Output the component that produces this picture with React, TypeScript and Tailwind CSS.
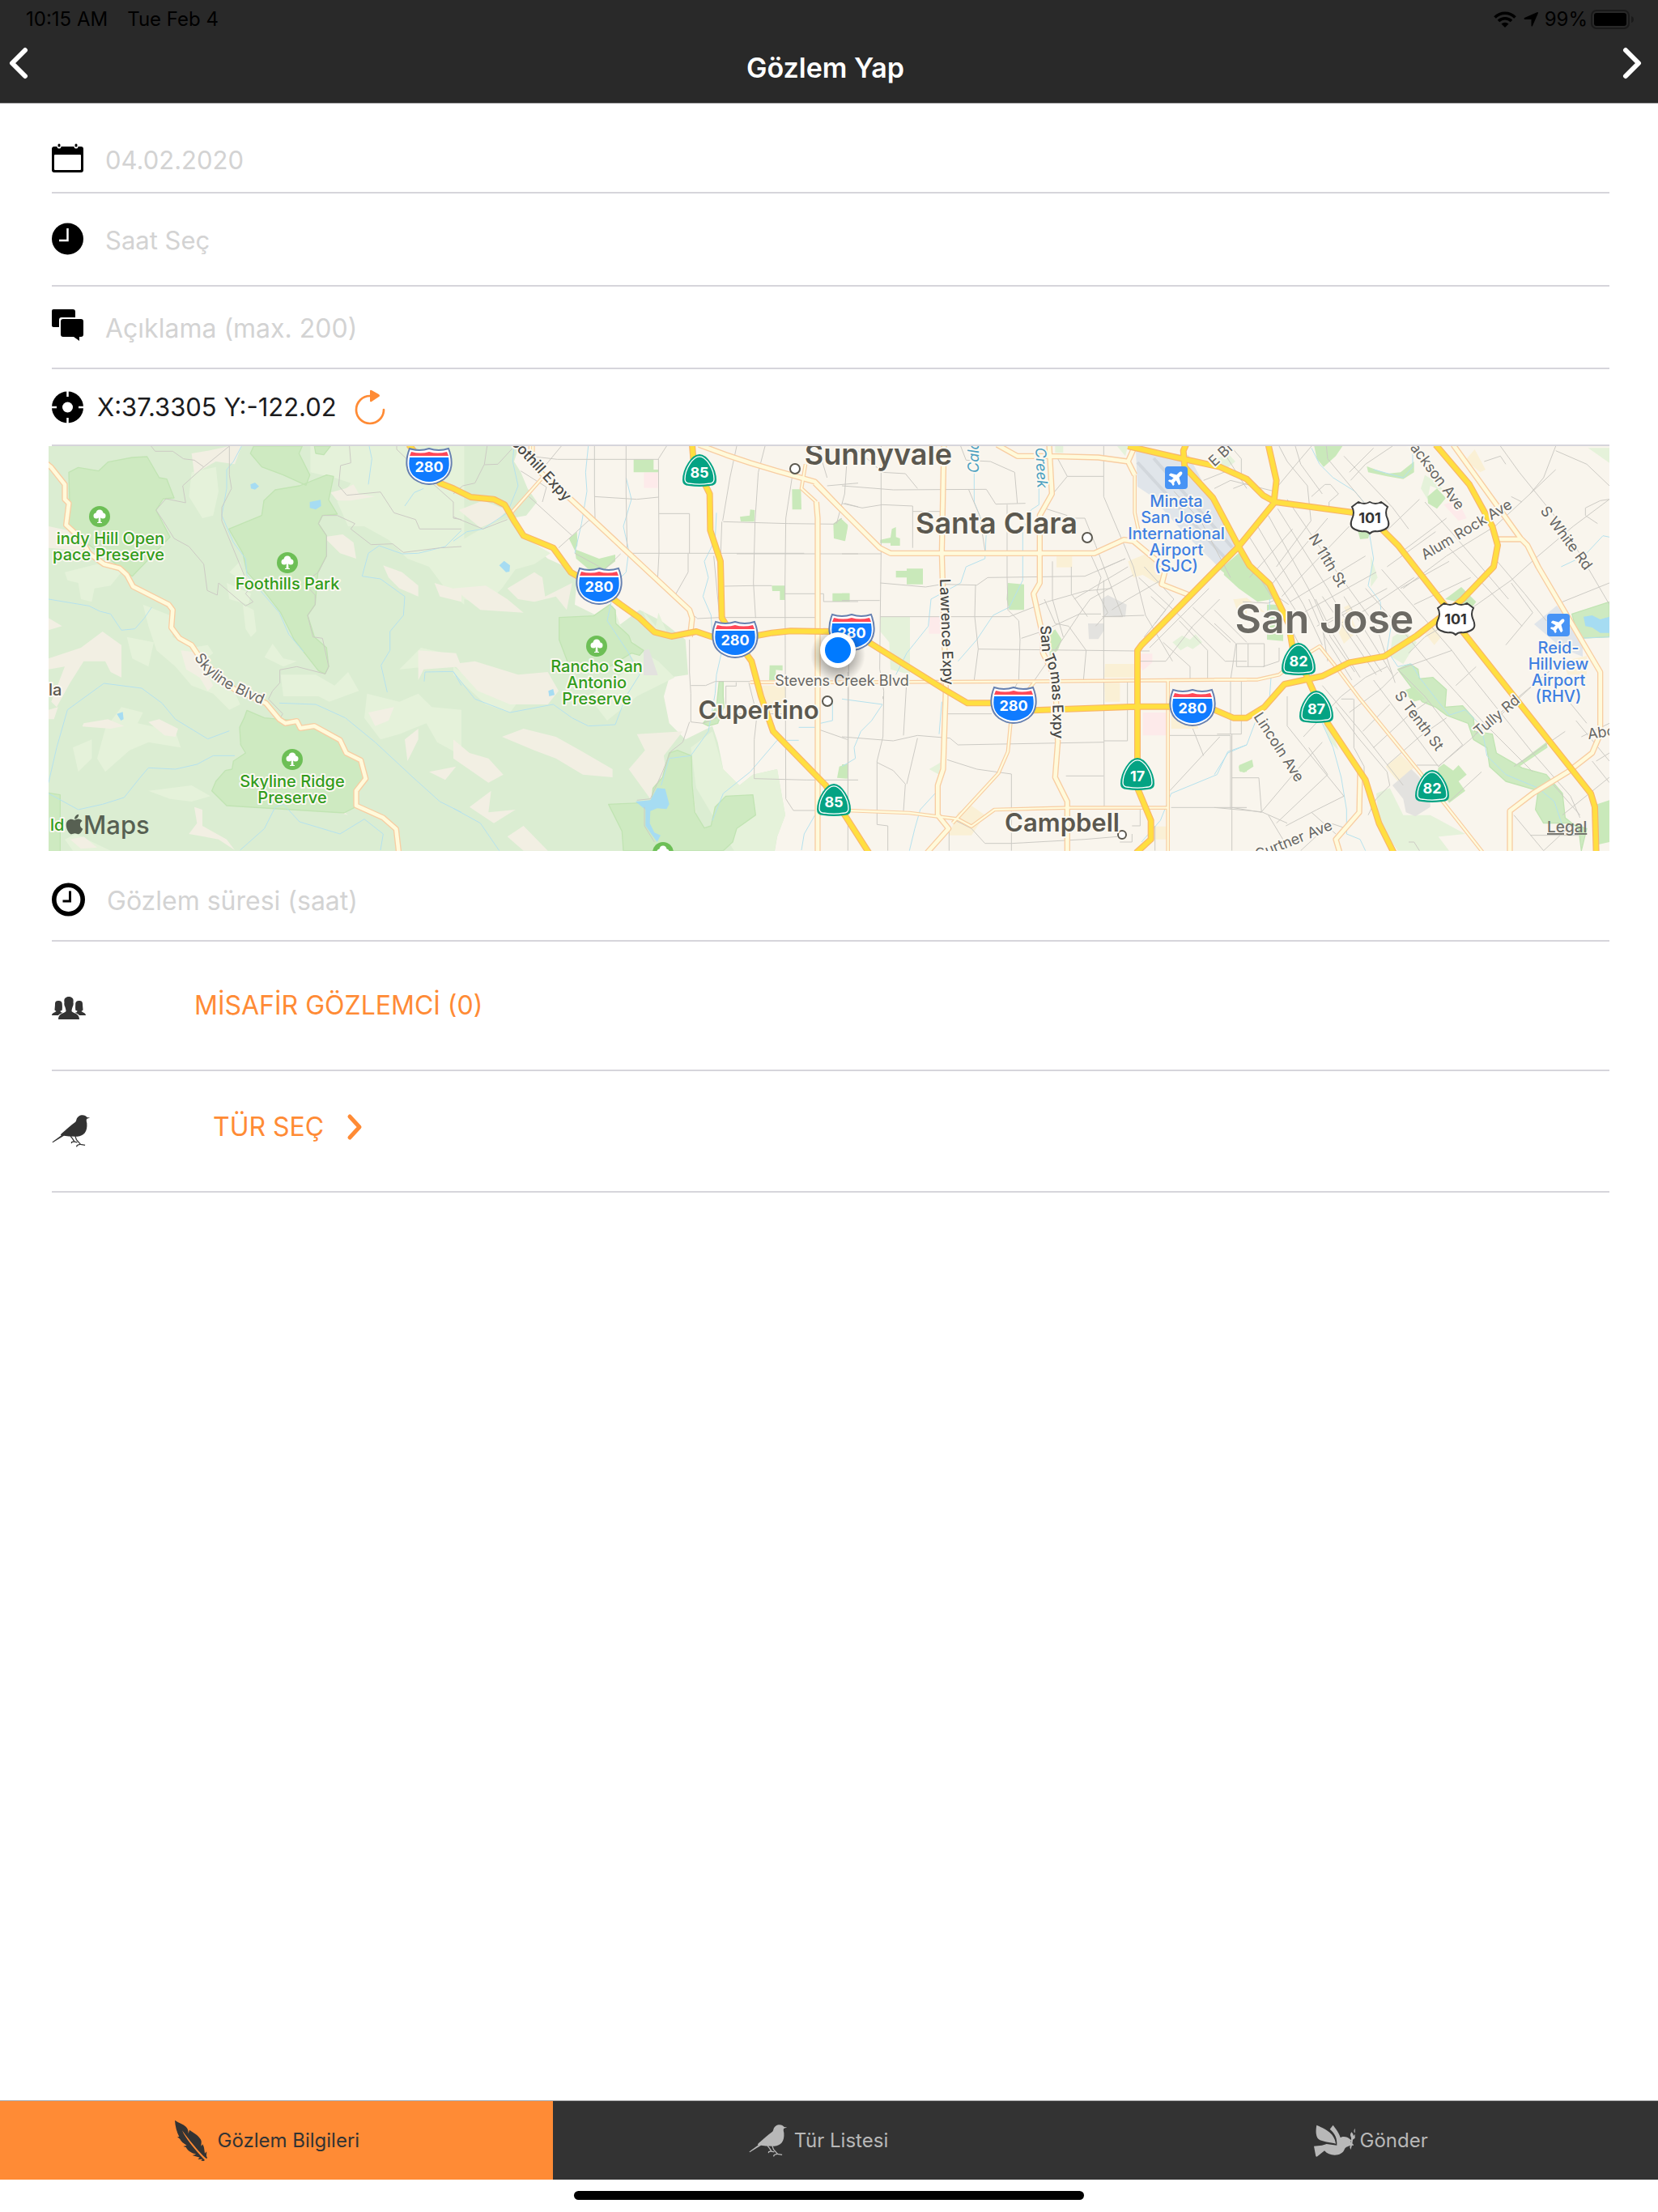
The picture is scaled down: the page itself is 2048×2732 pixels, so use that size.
import React from "react";
import { FaApple, FaPlane } from "react-icons/fa";

/* ---------- icons ---------- */

function BirdIcon({ className }: { className?: string }) {
  return (
    <svg viewBox="136 131 146 124" className={className} aria-hidden="true">
      <path
        fill="currentColor"
        d="M281 142 L269 146 C266 150 267 156 269 163 C270 180 268 190 261 200 C254 208 245 213 232 214 L200 213 L181 211 L138 237 L136 235 L171 209 L168 207 L172 202 C190 188 208 170 224 159 C228 156 228 152 229 149 C232 138 242 132 252 132 C260 132 266 136 270 140 Z"
      />
      <path
        fill="none"
        stroke="currentColor"
        strokeWidth="4"
        d="M206 212 L214 222 L221 233 L211 235 L210 240 M221 234 L232 236 M224 212 L229 226 L244 243 L232 247 L229 253 M244 244 L262 247"
      />
    </svg>
  );
}

function FeatherIcon() {
  return (
    <svg viewBox="99 106 168 168" className="size-14" aria-hidden="true">
      <path
        fill="currentColor"
        d="M111 114 C125 124 142 128 152 138 C160 146 161 154 161 164 L165 150 C180 160 196 168 206 184 C212 194 208 200 209 210 L214 203 C218 210 219 216 220 222 C221 230 222 233 222 237 L228 230 C230 240 225 246 231 252 L229 257 C222 252 210 240 200 229 C180 206 155 176 138 152 C150 180 180 218 222 262 L218 265 L208 264 L213 258 L196 259 L203 252 L176 244 L190 240 C172 236 160 228 152 214 L142 211 L155 207 C142 200 134 192 130 184 L120 175 L127 175 C118 158 112 135 111 114 Z"
      />
    </svg>
  );
}

function DoveIcon() {
  return (
    <svg viewBox="132 106 168 168" className="size-14 overflow-visible" aria-hidden="true">
      <g fill="currentColor">
        <path d="M139 132 C165 144 205 158 210 201 C190 196 160 194 146 184 C134 172 136 148 139 132 Z" />
        <path d="M188 147 L200 132 C206 142 220 155 227 178 C236 172 254 174 262 184 L272 190 L264 192 C268 198 278 204 276 207 L262 208 C252 212 246 215 243 220 C238 236 222 243 206 243 C190 243 178 238 168 227 L140 249 L136 248 L129 210 L159 207 L176 202 L214 207 C216 180 206 162 188 147 Z" />
        <path d="M268 158 C275 164 276 170 275 173 L281 166 V180 L273 186 C272 196 270 210 265 223 L262 214 C266 200 268 188 267 178 C262 170 264 164 268 158 Z" />
        <path d="M281 144 V161 C276 158 276 151 281 144 Z" />
      </g>
    </svg>
  );
}

function CalendarIcon() {
  return (
    <svg viewBox="0 0 40 40" className="size-10" aria-hidden="true">
      <rect x="0" y="5" width="39" height="32" rx="3" />
      <rect x="3" y="15" width="33" height="19" rx="1" fill="#fff" />
      <g stroke="#fff" strokeWidth="5" strokeLinecap="round">
        <path d="M9 4 V5 M30 4 V5" />
      </g>
      <g stroke="#000" strokeWidth="3" strokeLinecap="round">
        <path d="M9 3 V4 M30 3 V4" />
      </g>
    </svg>
  );
}

function SolidClockIcon() {
  return (
    <svg viewBox="0 0 40 40" className="size-10" aria-hidden="true">
      <circle cx="19.5" cy="20" r="19.5" />
      <path d="M19.500 7 V22 H9" fill="none" stroke="#fff" strokeWidth="2.500" />
    </svg>
  );
}

function CommentsIcon() {
  return (
    <svg viewBox="0 0 40 40" className="size-10" aria-hidden="true">
      <path d="M2 0 H26 Q29 0 29 3 V10 H12 Q9 10 9 13 V22 H2 Q0 22 0 20 V2 Q0 0 2 0 Z" />
      <path d="M14 12 H36 Q39 12 39 15 V31 Q39 34 36 34 H34 V39 L27 34 H14 Q11 34 11 31 V15 Q11 12 14 12 Z" />
    </svg>
  );
}

function TargetIcon() {
  return (
    <svg viewBox="0 0 40 40" className="size-10" aria-hidden="true">
      <circle cx="19.5" cy="20" r="19.5" />
      <circle cx="19.5" cy="20" r="6.5" fill="#fff" />
      <path d="M19.500 0 V7 M19.500 33 V40 M0 20 H6 M33 20 H40" stroke="#fff" strokeWidth="2.500" />
    </svg>
  );
}

function RefreshIcon() {
  return (
    <svg viewBox="0 0 40 44" className="h-11 w-10" aria-hidden="true">
      <path d="M36 25 A17 17 0 1 1 19 8 H22" fill="none" stroke="#ff8b35" strokeWidth="2.700" strokeLinecap="round" />
      <path d="M19 2 Q19 0 21 1 L30 6 Q32 8 30 9 L21 15 Q19 16 19 14 Z" fill="#ff8b35" />
    </svg>
  );
}

function RingClockIcon() {
  return (
    <svg viewBox="0 0 42 42" className="size-[42px]" aria-hidden="true">
      <circle cx="20.5" cy="21" r="17.7" fill="none" stroke="#000" strokeWidth="5.600" />
      <path d="M22.500 10.500 V23 H13.500" fill="none" stroke="#000" strokeWidth="3" />
    </svg>
  );
}

function PeopleIcon() {
  const side =
    "M4 9 C4 5.500 6 5 8 5 C11 5 13 6 12.800 10 C13 13 13 15 12.500 17 L10.500 17.500 C10.500 19 12 19.500 13.500 20 C11 20.500 9 21.500 8 23 H0 C0 20 4 19.500 5.500 18 L3.500 16.500 C3.500 14 4 12 4 9 Z";
  return (
    <svg viewBox="0 0 42 28" className="mt-1.5 h-7 w-[42px]" fill="#333" aria-hidden="true">
      <path d={side} />
      <path d={side} transform="translate(42 0) scale(-1 1)" />
      <path d="M15.500 7 C14.500 2 17.500 0 21 0 C24.500 0 27.500 2 26.500 7 C27 9 26.500 11 25.500 13 C25 15 24.500 16 24.500 18 C27 21 34 20.500 34 28 H8 C8 20.500 15 21 17.500 18 C17.500 16 17 15 16.500 13 C15.500 11 15 9 15.500 7 Z" />
    </svg>
  );
}

function Chevron({ direction }: { direction: "left" | "right" }) {
  return (
    <svg viewBox="0 0 24 40" className="h-10 w-6" aria-hidden="true">
      <path
        d={direction === "left" ? "M20 4 L4 20 L20 36" : "M4 4 L20 20 L4 36"}
        fill="none"
        stroke="currentColor"
        strokeWidth="6"
        strokeLinecap="round"
        strokeLinejoin="round"
      />
    </svg>
  );
}

/* ---------- map geometry (three units per pixel, four tiles) ---------- */

type Tile = {
  x: number;
  city?: string[];
  light?: string[];
  beige?: string[];
  park?: string[];
  lawn?: string[];
  sand?: string[];
  pink?: string[];
  grey?: string[];
  water?: string[];
  creek?: string[];
  street?: string[];
  thin?: string[];
  wide?: string[];
  highway?: string[];
};

const tiles: Tile[] = [
  {
    x: -10,
    light: [
      "M1000 33 H1570 V620 L1500 560 L1440 480 L1360 450 L1290 380 L1200 330 L1140 330 L1100 240 L1150 170 L1090 150 L1000 130 Z",
      "M560 130 L650 110 L660 200 L640 290 L600 300 L550 220 Z",
      "M90 500 L210 470 L300 500 L260 550 L200 560 L190 610 L150 600 L140 540 L100 530 Z",
      "M740 460 L760 540 L700 500 Z M690 540 L780 580 L770 620 L700 600 Z",
      "M750 620 L790 640 L800 720 L780 740 L760 710 Z M860 765 L900 820 L950 830 L900 850 L830 815 Z",
      "M380 620 L480 660 L490 740 L560 780 L620 770 L640 800 L600 830 L700 900 L740 990 L700 1010 L640 950 L560 920 L500 850 L430 790 L400 700 Z",
      "M320 740 L420 760 L400 850 L340 820 Z M890 880 L1020 880 L1090 920 L1140 870 L1180 940 L1070 980 L1030 960 L900 960 Z",
      "M240 1080 L300 1000 L380 1020 L360 1060 L500 1090 L520 1150 L400 1130 L330 1160 L240 1240 L210 1190 Z",
      "M120 1150 L190 1120 L190 1190 L140 1240 Z M400 1310 L560 1290 L630 1330 L560 1350 L480 1340 Z",
      "M1210 950 L1330 980 L1400 950 L1450 1000 L1560 1010 V1180 L1470 1130 L1430 1060 L1330 1100 L1260 1120 L1200 1040 Z",
      "M1330 860 L1380 810 L1410 780 L1500 800 L1440 850 Z",
      "M90 1490 L130 1470 L260 1532 H120 Z",
    ],
    beige: [
      "M560 60 L620 50 L700 33 L745 33 L720 100 L650 90 L570 135 Z",
      "M30 330 L100 345 L160 420 L30 410 Z",
      "M120 160 L230 140 L300 150 L300 180 L200 200 L160 230 L120 210 Z",
      "M30 820 L150 780 L230 720 L300 770 L300 890 L260 870 L240 830 L160 830 L110 910 L60 1000 L40 980 L90 850 L30 860 Z",
      "M30 670 L80 700 L30 715 Z M30 1010 L65 1000 L50 1045 L30 1045 Z",
      "M160 1060 L250 1045 L310 1070 L260 1080 L155 1072 Z M400 1055 L440 1045 L510 1080 L500 1110 L460 1105 Z",
      "M520 790 L600 800 L610 860 L640 920 L620 940 L590 890 L540 860 Z",
      "M1075 205 L1130 190 L1160 175 L1180 210 L1240 220 L1150 235 L1100 235 Z",
      "M1050 370 L1120 360 L1160 390 L1170 450 L1110 430 Z M1270 475 L1340 500 L1400 550 L1400 590 L1330 560 L1290 520 Z",
      "M1460 540 L1560 570 V610 L1480 590 Z M1400 790 L1540 800 L1560 850 L1420 860 L1400 900 Z",
      "M1215 1020 L1310 1000 L1290 1050 L1240 1070 Z M1350 1120 L1400 1080 L1400 1120 L1360 1200 Z M1440 1240 L1540 1220 L1500 1270 Z",
      "M570 1370 L600 1380 L600 1440 L690 1490 L720 1530 L660 1490 L550 1470 L580 1430 Z",
      "M110 1490 L160 1480 L210 1520 L150 1525 Z M940 300 L1010 290 L1010 340 L960 350 Z",
      "M980 1300 L1080 1350 L1140 1400 L1060 1380 Z",
    ],
    park: [
      "M105 130 L140 112 L215 125 L250 92 L340 75 L395 72 L440 150 L468 155 L495 225 L455 228 L428 270 L480 370 L340 515 L260 455 L160 385 L95 325 L108 245 Z",
      "M698 340 L820 290 L828 235 L870 195 L960 180 L1060 140 L1086 145 L1068 232 L1100 285 L1045 290 L1030 320 L1060 365 L1060 440 L1028 500 L1018 620 L990 660 L1015 740 L1060 780 L1068 850 L1055 877 L1030 865 L940 750 L890 650 L820 560 L765 500 L750 430 Z",
      "M778 60 L790 33 H970 L958 60 L998 140 L984 178 L900 140 L820 110 Z M1015 33 H1075 L1050 65 L1020 60 Z",
      "M765 1012 L830 1040 L885 1045 L950 1050 L965 1080 L1015 1070 L1110 1125 L1130 1170 L1185 1195 L1205 1265 L1168 1310 V1370 L1125 1392 L690 1365 L635 1310 L650 1275 L685 1235 L710 1230 L715 1200 L760 1170 L742 1140 L738 1075 L755 1040 Z",
      "M28 1318 L73 1325 V1534 H28 Z",
    ],
    water: [
      "M778 175 L795 168 L810 182 L795 194 L780 190 Z",
      "M998 240 L1038 232 L1040 255 L1020 268 L998 262 Z",
      "M283 1025 L305 1018 L308 1045 L298 1050 Z",
    ],
    creek: [
      "M745 33 L715 90 L690 120 L690 190 L672 290 L715 390 L760 450 L765 510 L885 650 L920 730 L975 795",
      "M1218 33 L1228 80 L1215 175 M1420 190 L1385 205 L1350 255 M1560 345 L1500 405 L1400 430 L1340 432 L1255 402 L1215 430 L1192 515 L1260 525 L1350 590 L1345 660 L1295 720 L1295 790 L1262 845 L1285 945",
      "M30 600 L180 625 L220 645 L260 655 L300 715 L350 710 L385 670 L412 630",
      "M30 1280 L60 1150 L100 1010 L235 912 L375 930 L450 985 L500 1045 L620 1118 L700 1088",
      "M30 1320 L140 1380 L230 1360 L310 1335 L370 1260 L400 1225 L500 1230 L580 1212 L640 1180 L720 1180",
      "M885 985 L1020 990 L1130 1040 L1240 1130 L1380 1260 L1480 1350 L1560 1390",
      "M740 1530 L830 1450 L870 1370 L900 1360 L960 1425 L1110 1470 L1200 1415 L1270 1470 L1260 1530",
      "M1422 905 L1425 870 L1530 868 L1560 920",
    ],
    street: [
      "M410 33 L425 52 L490 52 L530 80 L570 85 L605 110 L700 33 M700 33 L700 140 L708 190 L672 260 V310 L775 560 L760 580 L788 610 L760 625 L660 540 L655 585 L618 568 L605 470 L550 405 L495 375 L455 310 L428 270 L465 228 L538 243 L527 180 L605 110",
      "M1215 33 M1145 33 L1150 95 L1112 105 L1105 180 L1135 215 L1260 203 L1310 280 L1390 305 L1405 340 H1560 M1320 33 V45 L1440 160 L1530 240 L1530 300 L1560 305",
      "M1560 405 L1480 410 L1345 427 L1305 395 L1225 398 L1150 340 L1165 320 L1100 290 L1045 290 L1030 320 L1060 365 L1060 440 L1030 500 L975 540 L1018 585 V620 L990 660 L1010 740 L1045 745 L1068 850 L1055 877 L950 850 L887 862 V910 L860 940 L845 970 L898 1025 L885 1045",
    ],
    thin: [],
    wide: [
      "M20 95 L40 112 L90 175 V230 L105 245 L95 325 L150 375 L180 430 L235 470 L293 485 L320 510 L343 553 L475 620 L490 640 L485 705 L515 745 L560 770 L600 830 L720 935 L835 985 L885 1045 L908 1060 L950 1052 L963 1078 L1015 1070 L1110 1122 L1133 1170 L1187 1197 L1205 1265 L1170 1310 V1365 L1270 1410 L1318 1452 L1328 1540",
    ],
  },
  {
    x: 500,
    city: [
      "M245 30 L225 90 L250 130 L275 190 L310 240 L270 290 L215 300 L240 350 L350 450 L460 500 L450 620 L610 700 L690 640 L770 680 L860 750 L870 880 L800 890 L780 960 L800 1060 L860 1120 L960 1070 L980 1130 L1000 1230 L1060 1290 L1110 1250 L1200 1230 L1230 1400 L1200 1480 L1190 1540 H4310 V30 Z",
    ],
    light: [
      "M0 400 L120 330 L200 300 L260 370 L360 430 L300 470 L230 490 L180 560 L120 620 L0 590 Z",
      "M590 620 L620 700 L690 790 L760 830 L820 890 L680 960 L570 1050 L500 960 L680 840 L570 700 Z",
      "M960 1090 L1000 1230 L1060 1290 L1110 1250 L1200 1230 L1230 1400 L1200 1480 L1190 1532 H1040 L960 1400 L900 1300 L880 1150 Z",
      "M700 640 L750 700 L760 650 L790 720 L730 710 Z M0 850 L70 900 L160 950 L240 980 L210 1020 L120 990 L0 880 Z",
    ],
    beige: [
      "M0 840 L80 830 L240 880 L350 870 L390 940 L350 990 L210 990 L90 940 Z",
      "M180 1110 L260 1080 L380 1110 L470 1160 L590 1230 L590 1260 L480 1250 L380 1190 L300 1160 Z",
      "M680 1100 L850 1090 L780 1180 L790 1260 L730 1340 L650 1230 L710 1160 Z",
      "M0 560 L120 550 L200 600 L260 650 L100 640 Z M200 560 L300 500 L330 520 L340 590 L440 540 L420 640 L380 590 L300 610 L240 600 Z",
      "M0 1120 L60 1170 L130 1190 L185 1250 L130 1280 L0 1190 Z M60 1370 L140 1310 L130 1390 L230 1380 L150 1430 Z",
      "M200 1480 L260 1440 L350 1532 H260 Z M20 270 L110 235 L200 270 L160 310 L100 335 Z",
      "M800 1220 L880 1250 L900 1400 L860 1532 L800 1532 L770 1380 Z",
    ],
    sand: ["M1130 920 H1230 V1020 H1160 Z"],
    park: [
      "M392 668 L520 662 L580 620 L600 640 L602 690 L650 735 L660 760 L705 790 L690 808 L660 800 L560 862 L430 850 L392 750 Z",
      "M800 1170 L830 1160 L882 1180 L885 1290 L895 1390 L930 1448 L955 1440 L970 1370 L1010 1330 L1110 1325 L1120 1400 L1050 1450 L1035 1500 L1000 1532 H880 L760 1532 H630 L625 1460 L575 1360 L700 1355 L735 1345 L740 1300 L775 1260 Z",
      "M985 905 H1000 V960 L1003 1000 L980 1060 L945 1070 L925 1060 L975 1000 Z",
    ],
    lawn: [
      "M450 415 L540 450 L600 435 L600 460 L550 498 L500 488 L455 450 Z M428 375 L458 350 L460 400 L450 420 Z",
      "M668 82 H742 V120 H760 V130 H668 Z M1255 193 H1288 L1290 268 H1256 Z M1062 295 L1098 290 L1100 268 L1117 270 L1115 313 L1065 312 Z",
      "M1408 320 L1435 300 L1462 325 L1450 385 L1410 375 Z M1180 550 H1229 V603 H1210 V570 H1182 Z M1405 578 H1468 V609 H1405 Z",
      "M1172 845 H1220 V865 L1195 862 V900 H1170 Z M1422 1262 L1430 1220 L1460 1210 V1265 Z",
    ],
    pink: ["M706 130 H758 V188 H706 Z"],
    grey: ["M705 790 L725 785 L758 882 H705 Z"],
    water: [
      "M170 475 L188 458 L210 475 L208 498 L195 500 Z M352 940 L370 933 L375 955 L355 960 Z",
      "M755 1300 L785 1303 L800 1360 L790 1378 L755 1375 L730 1385 L728 1430 L745 1465 L768 1475 L755 1500 L712 1440 L712 1380 L675 1350 L730 1345 Z",
    ],
    creek: [
      "M0 385 L50 350 L110 340 L200 280 L240 180 L220 90 L225 33 M500 33 L490 130 L495 200 L475 320 L450 430 M640 150 L660 230 L630 330 L650 420 L640 500 L600 540",
      "M0 870 L80 970 L210 1020 L370 990 L440 1040 L500 1070 L600 1065 L640 960 L690 880 L650 800 L570 680 L585 610",
      "M975 280 L970 380 L930 460 L945 520 L925 590 L955 660 L960 740 L1000 770 L975 880 L970 950 L945 1090 L880 1180 L800 1190 L770 1290",
      "M1480 760 M1280 1123 H1200 L1100 1240 L1000 1320 L960 1420 M1340 1400 L1300 1470 L1290 1530 M1405 970 V1050 L1360 1060 M1280 1075 H1340 M0 1375 L100 1430 L170 1532",
    ],
    street: [
      "M523 33 V210 L525 300 L500 310 M640 33 V210 L644 410 M790 33 L760 80 L762 430 L757 525 M523 220 L680 230 L760 222 M300 72 L385 82 H760 M640 430 H1080 L1300 430 M1050 432 H1500 M762 283 H875 V430 M1000 313 L1240 320 L1410 322 L1440 300 M1050 33 L1025 150 L998 310 M1155 33 L1130 130 L1118 310 L1112 540 L1120 670 M1255 150 L1232 300 L1229 540 L1232 1340 L1260 1383 H1350",
      "M995 313 L990 450 M965 440 L980 600 L985 650 L1010 668 H1345 M1005 552 L1110 550 L1180 550 M1229 580 H1372 V609 H1500 M890 660 L905 672 L985 668 M870 432 V500 L822 585 M875 750 V870 L880 950 V1055 L925 1060 L1010 1025 V922 H1048 V908 M970 905 H1100 M880 920 H935 L970 905 M1095 910 L1125 1030 L1115 1120 V1265 L1310 1270 H1500 M875 1055 L850 1130 L805 1165 L775 1240 L730 1340 L680 1345 M708 1370 V1440 L745 1500",
      "M250 125 L345 185 L330 240 M280 220 L440 365 L390 410 M440 365 L500 310 M400 33 L320 130 M0 295 L110 340 L200 305 M60 33 M125 33 L115 100 L80 170 L35 180 L0 210 M115 102 L165 100 L220 40 M1350 33 L1385 150 M1460 60 L1450 210 L1420 320 M1385 180 L1500 170 M1460 1120 L1360 1085 M1465 800 L1462 1390 M1450 245 L1500 258 M620 432 L560 490 L450 430 M1025 1025 H1232",
    ],
    thin: [
      "M215 280 L330 150 M285 33 V70 M295 33 V75",
      "M1305 100 L1290 190 L1345 240",
      "M1100 908 H1500",
    ],
    wide: [
      "M300 110 L430 225 L875 640 L885 670 L877 740",
      "M910 28 L1010 65 L1100 95 L1200 125 L1340 165 L1440 270",
      "M1345 240 L1350 300 V1540",
    ],
    highway: [
      "M-165 28 L-50 170 L0 190 L65 222 L150 230 L190 250 L225 310 L260 365 L370 410 L435 500 L540 560 L620 620 L690 670 L745 722 L808 738 L900 720 L965 742 L1045 750 L1180 725 L1250 718 L1400 720 L1480 725",
      "M885 28 L890 90 L950 210 L952 345 L990 460 L995 670 L1040 740 L1105 830 L1140 960 L1185 1090 L1380 1290 L1540 1540",
    ],
  },
  {
    x: 980,
    park: [],
    lawn: [
      "M142 380 L180 372 L185 340 L200 333 V370 L215 375 V402 H180 V392 H142 Z M200 495 H240 V487 H300 V545 H240 V520 H200 Z",
      "M0 578 H28 V609 H0 Z M0 305 L22 330 L12 385 L0 380 Z M0 1212 H20 V1262 H0 Z M1470 1220 L1500 1205 V1240 H1475 Z",
      "M765 730 L790 712 L815 750 L800 790 L770 810 Z",
      "M1400 490 L1470 430 L1500 440 V580 L1450 530 Z",
      "M615 540 L675 545 V640 L620 640 L610 600 Z",
    ],
    light: [
      "M142 665 H252 V880 L180 860 L175 760 L142 720 Z",
      "M1225 760 L1260 735 L1290 750 L1310 730 L1335 760 L1300 785 L1280 775 L1255 790 Z",
      "M323 1230 L365 1205 L360 1250 Z M1120 650 M1390 80 L1430 60 L1458 90 L1420 120 Z M790 33 H820 V58 H790 Z",
      "M1020 33 H1060 L1050 70 Z",
    ],
    sand: [
      "M795 442 H853 V482 H795 Z M975 840 H1090 V890 H972 Z M972 910 H1030 V980 H975 Z M430 1390 L480 1365 L530 1400 L480 1475 H395 Z M1150 1442 H1205 V1490 H1150 Z",
      "M1060 460 L1120 435 L1200 480 L1180 550 L1115 510 L1080 520 Z M1220 1030 H1320 V1080 H1220 Z M1450 600 H1500 V660 H1470 Z",
    ],
    pink: ["M322 665 H365 V728 H322 Z M1105 802 H1150 V835 L1115 865 L1100 840 Z M1115 1020 H1202 V1105 H1115 Z"],
    grey: ["M962 600 L985 585 L1055 620 L1050 665 H970 Z M912 690 H972 V715 L950 748 H915 Z"],
    creek: [
      "M490 120 V240 L535 350 L530 450 L460 480 L440 540 L330 600 L320 700 L240 800 L200 880 M730 180 V250 L700 270 L670 350 V530 L620 630 L560 660 L500 750 L430 830",
      "M0 970 L150 990 L110 1050 L70 1090 L45 1150 L50 1190 L0 1220 M370 980 L360 1100 M345 1320 L290 1380 L270 1450 L250 1532",
      "M1500 1140 L1430 1165 L1390 1250 L1220 1320 L1180 1420 L1110 1500",
    ],
    street: [
      "M145 33 V430 L142 660 L140 860 L155 940 L152 1110 L130 1200 V1435 L170 1440 V1532 M0 432 H145 M142 540 L310 555 L370 545 L500 548 L540 520 L900 515 L1050 450 M0 605 H140 M142 665 H620 L760 610 L900 570 L1000 560 M0 245 L75 262 L150 250 L262 255 V410 M262 275 H370 M0 180 L190 195 L535 193 L570 248 L680 245",
      "M60 50 L150 130 L235 135 L280 190 M440 33 L460 85 L550 90 L640 130 L650 245 M470 195 L510 290 L530 420 M612 250 V515 L615 640 L655 680 L660 750 L655 900 L640 930 M495 548 L492 665 L505 785 L490 900 M505 785 L1090 792 H1140 M240 900 L228 1105 M152 970 V960",
      "M390 1025 H555 M0 1110 L190 1125 L280 1105 L400 1115 L430 1140 L970 1130 M240 1285 L280 1115 M130 1205 L190 1235 L235 1285 L228 1385 M390 1195 L500 1230 L628 1248 V1532 M400 1410 L480 1450 L530 1505 L630 1505 L900 1490 L1020 1480 M830 1255 H970 M970 530 V800 L972 1378 M22 870 V1532 M397 1460 V1532",
      "M835 145 H970 V220 L1080 480 L1125 660 L1225 830 M800 80 L835 145 L740 260 L835 290 M970 33 V145 M815 300 H900 L940 400 L1000 560 L1040 665 H965 L1120 660 M780 460 V600 L820 740 M850 480 V580 L910 665 M920 430 L960 520 L945 570 L985 650 L940 700 M1050 450 L960 490 M1060 480 L860 600 M1080 510 L920 600 L880 655 L790 790 L700 920",
      "M665 745 L740 720 L880 655 H960 M750 600 L790 690 L840 700 L905 790 L895 900 M1100 520 L1250 660 L1420 830 H1500 M1145 590 L1200 640 L1120 740 M1100 830 L1200 830 L1300 700 L1400 600 M1140 780 L1280 640 L1360 560 M1190 760 L1290 850 V900 M1250 680 L1355 790 V900 M1300 630 L1440 760 M1058 900 V1125 H972 M1215 1105 H1440 V1380 M1220 1372 H1500",
      "M1215 1310 L1400 1110 M1300 1080 L1340 1180 M1160 1440 V1532 M1075 1440 H1105 V1380 M1030 1500 H1075 V1470 M1230 200 L1330 310 L1440 520 M1400 33 L1500 190 M1340 160 L1440 120 M1450 190 L1500 170 M1120 480 L1230 600 L1160 690 M1200 520 L1060 600 L1000 640",
    ],
    thin: [
      "M0 908 L700 905 L1500 898",
      "M1208 900 V1540",
      "M20 1383 L250 1392 L430 1415 L480 1442 L565 1380 L835 1373 H1210",
      "M715 905 L640 1000 L625 1060 L615 1165 L580 1245 L410 1430",
      "M1085 140 V280 L1100 350",
    ],
    wide: [
      "M-100 170 L0 270 L140 410 L180 430 H935 L1045 380 L1080 385 L1200 485 L1185 545 L1300 590",
      "M378 28 L370 430 L385 930 L380 1080 L375 1230 L355 1290 V1400 L395 1450 L315 1540",
      "M768 28 L778 210 L733 290 V540 L710 580 L745 740 L745 800 L790 890 L800 1130 L790 1260 L835 1350 V1540",
      "M575 28 L650 70 H770 L950 75 L1060 90 L1085 140 M1060 90 L1080 45",
    ],
    highway: [
      "M30 720 L100 760 L380 935 L465 985 H555 L640 1000 L710 1012 L1090 998 H1220 L1300 995 L1380 1010 L1450 1040 H1500 L1565 1000 L1640 915 L1780 885 L1880 835 L2010 812 L2130 735 L2240 650 L2300 600 L2415 480 L2430 400 L2410 330 L2325 175 L2200 28",
      "M1090 1540 L1145 1490 V1420 L1095 1300 V790 L1110 770 L1470 405 L1600 245 L1610 160 L1580 28",
      "M1060 33 L1240 75 L1400 110 L1500 155 L1560 215 L1605 240 L1900 280 L1990 330 L2060 400 L2240 630 L2300 720 L2775 1320 L2790 1370 L2795 1540",
      "M1275 28 L1265 50 L1270 110 L1375 225 L1470 405 L1510 475 L1585 545 L1655 690 L1670 780 L1720 880 L1760 970 L1800 1060 L1940 1270 L1990 1430 L2045 1540",
    ],
  },
  {
    x: 1440,
    park: [
      "M680 860 L725 840 L755 860 L760 895 L810 890 L860 935 L855 1000 L920 995 L960 1040 L965 1090 L1030 1100 L1045 1170 L1140 1225 L1230 1250 L1290 1320 L1300 1410 L1350 1450 L1360 1532 L1380 1450 L1310 1430 L1220 1430 L1190 1380 L1200 1310 L1080 1275 L1020 1220 L1010 1150 L960 1120 L940 1060 L860 1030 L820 1000 L770 980 Z",
      "M1325 655 L1464 610 V740 L1350 745 Z",
    ],
    lawn: [
      "M90 430 L140 490 L205 545 L215 600 L160 610 L90 560 L35 510 L40 480 Z M195 620 H240 V690 L255 700 V755 L195 750 Z",
      "M370 33 H475 L450 70 L405 110 L380 80 Z M530 340 H580 L570 375 L540 378 Z M855 600 L915 555 L970 610 L940 650 L900 610 Z",
      "M790 220 L825 190 L858 225 L825 265 L792 245 Z M92 1215 L140 1195 L145 1220 L110 1243 L92 1235 Z",
      "M830 1225 L850 1210 L885 1235 L905 1215 L935 1250 L905 1275 L930 1310 L870 1355 L820 1280 Z",
      "M565 108 L640 135 L690 130 L740 90 V130 L700 155 L640 145 L570 130 Z M700 940 L740 925 L780 970 L735 980 Z",
      "M1418 1360 L1464 1345 V1500 L1420 1510 Z M1110 1220 L1230 1130 L1235 1150 L1130 1220 Z",
    ],
    light: [
      "M600 1320 L650 1300 L700 1400 L800 1400 L930 1470 L830 1480 L870 1532 H680 L610 1430 Z",
      "M780 140 L830 170 L850 200 L800 180 L790 230 L765 190 Z M660 740 L700 715 L750 760 L700 840 L650 810 Z",
      "M0 100 L30 70 L70 90 L50 110 Z M580 440 L605 520 L580 555 Z M400 1050 L440 1100 L460 1160 L430 1130 Z M1385 40 H1464 V95 Z",
    ],
    sand: [
      "M635 1220 L690 1175 L740 1225 L680 1275 Z M930 85 L965 45 L1005 120 L985 130 Z M780 725 L810 700 L840 740 L815 770 Z M80 600 L120 595 L190 650 L100 630 Z",
      "M1290 830 L1380 810 L1380 880 L1310 880 Z M450 700 L500 650 L530 720 L480 765 Z M480 630 L500 620 L515 650 L490 650 Z",
    ],
    pink: ["M850 250 L900 230 L935 300 L905 310 Z"],
    grey: ["M660 1290 L730 1230 L760 1260 L800 1340 L800 1370 L745 1405 L710 1390 L700 1340 Z"],
    water: ["M1368 665 L1400 660 L1430 675 L1464 665 V725 L1430 725 L1400 705 L1375 700 Z"],
    creek: [
      "M360 40 L390 100 L440 150 L520 200 L570 260 L575 360 L590 450 L570 550 L615 610 L620 680 L655 700 L640 790 L680 850 L730 840 L760 890 L830 980 L870 1030 L930 1010 L990 1070 L1010 1180 L1080 1250 L1200 1300 L1260 1350 L1290 1440",
      "M210 890 L205 960 L150 1060 L120 1140 L50 1170 L0 1250 M400 1060 L440 1150 L470 1260 L490 1380 L490 1470 L540 1490 L560 1532 M1285 480 L1370 440 L1440 365 L1464 370 M1350 745 L1464 740 M590 120 L700 150 L735 110 L735 33",
      "M205 600 V670 L240 680",
    ],
    street: [
      "M60 33 L100 80 V160 M0 190 L60 160 L220 200 L320 80 L360 33 M240 33 L270 90 L345 180 L358 310 L230 480 M300 33 L320 100 L400 210 M415 33 L420 80 L640 345 L830 580 M360 220 L410 175 H430 L460 210 L425 240 V270 M480 70 L660 260 L720 340 M500 130 L590 40 M660 33 L560 100 L505 160",
      "M235 265 L420 560 L470 650 L620 870 M200 290 L370 600 L430 740 L520 870 M160 330 L330 620 L400 770 M130 370 L300 640 M105 420 L280 700 L330 800 M270 230 L440 480 L600 700 L670 910 M290 340 L130 520 M420 300 L200 560 M500 330 L250 590 M560 440 L280 610 M600 500 L330 650 M640 560 L380 700 M740 520 L560 640 L430 710",
      "M350 600 L410 740 L510 900 M375 600 L440 730 L540 890 M400 590 L600 880 M480 590 L660 880 M510 640 L400 700 L420 830 M0 640 L90 730 L120 760 M82 765 H185 V850 H82 Z M125 765 V850 M0 690 L80 765 L60 900 V1100 M180 850 L240 830 V780 M105 610 L200 615 L240 595 L275 620",
      "M620 490 L880 790 L940 870 L1180 1170 L1320 1330 L1355 1410 M560 560 L700 720 L790 830 L900 950 L1000 1060 L1180 1240 M700 560 L860 440 L1040 330 L1170 210 L1265 120 M860 700 L1100 530 L1200 440 L1330 330 L1464 230 M640 480 L820 350 M690 560 L870 460 M740 620 L950 520 M640 345 L760 230 M700 420 L860 300 M780 240 L920 400 L1090 600 M720 800 L780 740 L850 700 M685 860 L880 790",
      "M1060 33 L1130 130 L1300 340 L1464 620 M1265 33 L1220 150 L1170 210 M1265 50 L1380 100 L1464 180 M1464 230 L1430 235 L1375 262 V290 L1420 320 M1100 540 L1180 650 L1080 770 M1140 240 L1100 220 M1290 610 L1464 540 M1040 450 L1150 580 L1230 680 M1000 90 L1060 70 L1080 100 M860 400 L1020 570 L1140 700",
      "M830 1220 L960 1110 L1000 1060 M970 1100 L1130 960 L1250 860 M895 920 L970 850 M1060 1030 L1180 920 M1110 1220 L1170 1180 L1300 1090 M1360 1110 L1464 1060 M1415 1200 L1464 1170 M1340 1050 L1464 1200 M1290 950 L1380 1060 M990 1240 L870 1350 M830 1220 L920 1140 L780 960 L680 860 M1240 1270 L1355 1400",
      "M640 1215 L760 1110 L860 1040 M590 1150 L720 1030 L790 980 M550 1090 L650 990 M500 1020 L620 930 L680 870 M330 1110 L470 960 L560 890 L640 850 M450 1000 L530 1110 L640 1240 L650 1290 L600 1340 L570 1400 M590 900 L830 1220 M400 920 L560 1110 L700 1290 M470 970 H515 M517 970 V1150 L555 1220 V1290 M270 960 V1070 L350 1170 L480 1330 M65 1100 V1532",
      "M65 1262 H165 L175 1390 L65 1372 M100 900 V1100 H10 M0 1372 L175 1388 L270 1430 M175 1388 L300 1240 L400 1130 M230 1430 L420 1250 L350 1150 M265 1440 L380 1380 L480 1330 M200 1400 L260 1500 M320 1532 L430 1430 L490 1450 M360 1390 L450 1470 M750 1215 H830 M720 1500 L740 1500 L760 1532 M1110 1400 L1220 1532 M1170 1475 H1350 M1290 1400 L1464 1260 M1400 1200 L1464 1280 M1220 1532 L1330 1430",
    ],
    thin: ["M0 898 H160 L240 880 L300 830 L390 775 L450 850 L540 970 L760 1240 L1000 1545"],
    wide: [
      "M540 1240 L537 1390 L450 1490 L465 1540",
      "M885 28 L1135 375 L1160 400 L1200 480 L1430 870 V1100 L1400 1170 L1310 1240 L1180 1320 L1095 1385 V1540",
      "M1040 378 H1135",
    ],
    highway: [],
  },
];

type ShapeKey = Exclude<keyof Tile, "x">;

function Shapes({ kind, ...paint }: { kind: ShapeKey } & Omit<React.SVGProps<SVGPathElement>, "kind">) {
  return (
    <>
      {tiles.map((tile) =>
        tile[kind]?.length ? (
          <path
            key={`${kind}${tile.x}`}
            transform={`translate(${tile.x} -11) scale(0.33333)`}
            d={tile[kind]!.join(" ")}
            strokeLinejoin="round"
            {...paint}
          />
        ) : null
      )}
    </>
  );
}

/* ---------- map labels ---------- */

function ParkPin({ x, y }: { x: number; y: number }) {
  return (
    <g transform={`translate(${x} ${y})`}>
      <circle r="13" fill="#6dbf56" />
      <g fill="#fff">
        <circle cx="0" cy="-4" r="4.5" />
        <circle cx="-4" cy="-1" r="3.5" />
        <circle cx="4" cy="-1" r="3.5" />
        <path d="M-1 0 H1 L1.500 7 H3 V8 H-3 V7 H-1.500 Z" />
      </g>
    </g>
  );
}

function Interstate({ x, y }: { x: number; y: number }) {
  return (
    <g transform={`translate(${x} ${y})`}>
      <path
        d="M-24 -22 Q-12 -18 0 -22 Q12 -18 24 -22 C30 -7 29 8 18 16 Q9 22 0 22 Q-9 22 -18 16 C-29 8 -30 -7 -24 -22 Z"
        fill="#fff"
        stroke="#6680b0"
        strokeWidth="2"
      />
      <path d="M-24 -11 H24 C26 1 24 9 16 14 Q8 19 0 19 Q-8 19 -16 14 C-24 9 -26 1 -24 -11 Z" fill="#0f7bff" />
      <path d="M-22 -18 Q-10 -15 0 -18 Q10 -15 22 -18 L24 -13 H-24 Z" fill="#ff4858" />
      <text y="7" textAnchor="middle" className="text-[18px] font-bold" fill="#fff">
        280
      </text>
    </g>
  );
}

function StateRoute({ x, y, label }: { x: number; y: number; label: string }) {
  const d = "M0 -19 C9 -19 20 -2 20 12 Q20 18 13 18 Q0 20 -13 18 Q-20 18 -20 12 C-20 -2 -9 -19 0 -19 Z";
  return (
    <g transform={`translate(${x} ${y})`}>
      <path d={d} fill="#04a383" stroke="#04a383" strokeWidth="2" />
      <path d={d} fill="none" stroke="#fff" strokeWidth="1.500" transform="scale(0.9)" />
      <text y="9" textAnchor="middle" className="text-[18px] font-bold" fill="#fff">
        {label}
      </text>
    </g>
  );
}

function UsRoute({ x, y }: { x: number; y: number }) {
  return (
    <g transform={`translate(${x} ${y})`}>
      <path
        d="M-14 -19 Q-7 -15 0 -19 Q7 -15 14 -19 Q17 -17 22 -13 Q18 -6 22 2 Q26 12 18 15 Q12 18 7 17 Q3 17 0 20 Q-3 17 -7 17 Q-12 18 -18 15 Q-26 12 -22 2 Q-18 -6 -22 -13 Q-17 -17 -14 -19 Z"
        fill="#fff"
        stroke="#3c3c3c"
        strokeWidth="2"
      />
      <text y="7" textAnchor="middle" className="text-[18px] font-bold" fill="#333">
        101
      </text>
    </g>
  );
}

function AirportPin({ x, y }: { x: number; y: number }) {
  return (
    <g transform={`translate(${x} ${y})`}>
      <rect width="28" height="28" rx="4" fill="#4793f5" />
      <g transform="rotate(-45 14 14)">
        <FaPlane x={4} y={4} size={20} color="#fff" />
      </g>
    </g>
  );
}

const halo = { stroke: "#fbf8f1", strokeWidth: 4, paintOrder: "stroke", strokeLinejoin: "round" } as const;

function Label({
  x,
  y,
  lines,
  anchor = "middle",
  rotate = 0,
  className,
}: {
  x: number;
  y: number;
  lines: string[];
  anchor?: "start" | "middle" | "end";
  rotate?: number;
  className: string;
}) {
  return (
    <text transform={`translate(${x} ${y}) rotate(${rotate})`} textAnchor={anchor} className={className} {...halo}>
      {lines.map((line, i) => (
        <tspan key={line} x="0" y={i * 20}>
          {line}
        </tspan>
      ))}
    </text>
  );
}

const park = "fill-[#329c1b] text-[20px] font-medium";
const road = "fill-[#666664] text-[18px]";
const expressway = "fill-[#484846] text-[18px] font-medium";
const airport = "fill-[#3f80e2] text-[20px] font-medium";
const stream = "fill-[#4a9fc0] text-[18px] italic";
const town = "fill-[#5b584f] text-[36px] font-semibold";
const smallTown = "fill-[#5b584f] text-[31px] font-semibold";

function ObservationMap() {
  return (
    <svg
      viewBox="0 0 1928 500"
      preserveAspectRatio="xMidYMid slice"
      className="block h-[500px] w-full"
      role="img"
      aria-label="Harita"
    >
      <defs>
        <path id="skyline" d="M180 261 Q196 288 230 304 Q250 314 274 323" />
        <path id="tomas" d="M1225 222 L1227 250 Q1229 262 1236 275 Q1241 292 1241 372" />
        <radialGradient id="dotShadow">
          <stop offset="0.5" stopColor="#000" stopOpacity="0.3" />
          <stop offset="1" stopColor="#000" stopOpacity="0" />
        </radialGradient>
      </defs>

      <rect width="1928" height="500" fill="#dbedd2" />
      <Shapes kind="city" fill="#f9f5ed" />
      <Shapes kind="light" fill="#e5f2da" />
      <Shapes kind="beige" fill="#f2efe3" />
      <Shapes kind="sand" fill="#faf0d5" />
      <Shapes kind="pink" fill="#fdeaea" />
      <Shapes kind="grey" fill="#e3e2df" />
      <Shapes kind="park" fill="#ceeac1" stroke="#c1e4b3" strokeWidth="4" />
      <Shapes kind="lawn" fill="#c9e9ba" />
      <path d="M1343 5 L1408 11 L1455 100 L1470 125 L1445 149 L1405 110 L1360 60 L1345 50 Z" fill="#e0e5ea" />
      <path d="M1345 20 L1455 140 M1365 15 L1462 125" stroke="#d2d7dc" strokeWidth="4" />
      <path d="M1835 220 L1863 197 L1895 235 L1895 260 L1870 250 Z" fill="#e0e5ea" />
      <Shapes kind="water" fill="#a6dcf2" />
      <Shapes kind="creek" fill="none" stroke="#b5e1ee" strokeWidth="3" />
      <Shapes kind="street" fill="none" stroke="#cccac4" strokeWidth="3" />
      <Shapes kind="thin" fill="none" stroke="#f8cda2" strokeWidth="14" />
      <Shapes kind="wide" fill="none" stroke="#f8cda2" strokeWidth="22" />
      <Shapes kind="thin" fill="none" stroke="#fffadb" strokeWidth="7" />
      <Shapes kind="wide" fill="none" stroke="#fffadb" strokeWidth="14" />
      <Shapes kind="highway" fill="none" stroke="#f9b668" strokeWidth="24" />
      <Shapes kind="highway" fill="none" stroke="#ffdf40" strokeWidth="17" />

      <ParkPin x={63} y={87} />
      <ParkPin x={295} y={144} />
      <ParkPin x={301} y={387} />
      <ParkPin x={677} y={247} />
      <ParkPin x={759} y={502} />
      <Label x={143} y={121} anchor="end" lines={["indy Hill Open", "pace Preserve"]} className={park} />
      <Label x={295} y={177} lines={["Foothills Park"]} className={park} />
      <Label x={301} y={421} lines={["Skyline Ridge", "Preserve"]} className={park} />
      <Label x={677} y={279} lines={["Rancho San", "Antonio", "Preserve"]} className={park} />
      <Label x={2} y={475} anchor="start" lines={["ld"]} className={park} />
      <Label x={0} y={308} anchor="start" lines={["la"]} className="fill-[#5b584f] text-[20px] font-medium" />

      <text className={road} {...halo}>
        <textPath href="#skyline">Skyline Blvd</textPath>
      </text>
      <text className={expressway} {...halo}>
        <textPath href="#tomas">San Tomas Expy</textPath>
      </text>
      <Label x={638} y={69} rotate={47} anchor="end" lines={["Foothill Expy"]} className={expressway} />
      <Label x={1101} y={164} rotate={88} anchor="start" lines={["Lawrence Expy"]} className={expressway} />
      <Label x={980} y={296} lines={["Stevens Creek Blvd"]} className={road} />
      <Label x={1149} y={33} rotate={-90} anchor="start" lines={["Cala"]} className={stream} />
      <Label x={1219} y={2} rotate={87} anchor="start" lines={["Creek"]} className={stream} />
      <Label x={1440} y={26} rotate={-43} anchor="start" lines={["E Br"]} className={road} />
      <Label x={1740} y={80} rotate={53} anchor="end" lines={["Jackson Ave"]} className={road} />
      <Label x={1700} y={141} rotate={-31} anchor="start" lines={["Alum Rock Ave"]} className={road} />
      <Label x={1556} y={113} rotate={59} anchor="start" lines={["N 11th St"]} className={road} />
      <Label x={1842} y={80} rotate={53} anchor="start" lines={["S White Rd"]} className={road} />
      <Label x={1662} y={308} rotate={53} anchor="start" lines={["S Tenth St"]} className={road} />
      <Label x={1767} y={359} rotate={-40} anchor="start" lines={["Tully Rd"]} className={road} />
      <Label x={1488} y={334} rotate={57} anchor="start" lines={["Lincoln Ave"]} className={road} />
      <Label x={1587} y={473} rotate={-22} anchor="end" lines={["Curtner Ave"]} className={road} />
      <Label x={1902} y={362} rotate={-8} anchor="start" lines={["Abo"]} className={road} />

      <AirportPin x={1379} y={25} />
      <Label x={1393} y={75} lines={["Mineta", "San José", "International", "Airport", "(SJC)"]} className={airport} />
      <AirportPin x={1851} y={207} />
      <Label x={1865} y={256} lines={["Reid-", "Hillview", "Airport", "(RHV)"]} className={airport} />

      <g fill="#fff" stroke="#5b584f" strokeWidth="2">
        <circle cx="922" cy="28" r="6" />
        <circle cx="962" cy="315" r="6" />
        <circle cx="1283" cy="113" r="6" />
        <circle cx="1326" cy="480" r="5" />
      </g>
      <Label x={1025} y={23} lines={["Sunnyvale"]} className={town} />
      <Label x={1171} y={108} lines={["Santa Clara"]} className={town} />
      <Label x={877} y={337} lines={["Cupertino"]} className={smallTown} />
      <Label x={1252} y={476} lines={["Campbell"]} className={smallTown} />
      <Label x={1576} y={231} lines={["San Jose"]} className="fill-[#6c6a64] text-[50px] font-semibold" />

      <Interstate x={470} y={25} />
      <Interstate x={680} y={173} />
      <Interstate x={848} y={239} />
      <Interstate x={992} y={230} />
      <Interstate x={1192} y={320} />
      <Interstate x={1413} y={323} />
      <StateRoute x={804} y={30} label="85" />
      <StateRoute x={970} y={437} label="85" />
      <StateRoute x={1345} y={405} label="17" />
      <StateRoute x={1544} y={263} label="82" />
      <StateRoute x={1566} y={322} label="87" />
      <StateRoute x={1709} y={420} label="82" />
      <UsRoute x={1632} y={88} />
      <UsRoute x={1738} y={213} />

      <circle cx="975" cy="258" r="34" fill="url(#dotShadow)" />
      <circle cx="975" cy="252" r="22" fill="#fff" />
      <circle cx="975" cy="252" r="16" fill="#007aff" />

      <FaApple x={18} y={453} size={28} color="#576052" />
      <text x="43" y="479" className="fill-[#576052] text-[31px] font-medium">
        Maps
      </text>
      <a href="#legal">
        <text x="1851" y="477" className="fill-[#71716b] text-[19px] font-medium underline">
          Legal
        </text>
      </a>
    </svg>
  );
}

/* ---------- page ---------- */

const field =
  "h-10 min-w-0 flex-1 bg-transparent leading-10 text-[#1c1c1e] outline-none placeholder:text-[#d3d3d3]";

export default function App() {
  return (
    <div className="flex min-h-screen flex-col bg-white font-['Inter',sans-serif]">
      <header className="h-32 border-b border-[#a5a3a6] bg-[#292929]">
        <div className="flex h-12 items-center justify-between pr-[30px] pl-8 text-[24px] text-black">
          <div className="flex gap-6">
            <span>10:15 AM</span>
            <span>Tue Feb 4</span>
          </div>
          <div className="flex items-center">
            <svg viewBox="0 0 28 20" className="h-5 w-7" aria-hidden="true">
              <g fill="none" stroke="#000" strokeWidth="3.600">
                <path d="M1.500 7.500 A17.500 17.500 0 0 1 26.500 7.500" />
                <path d="M6 12 A11.500 11.500 0 0 1 22 12" />
              </g>
              <path d="M14 20 L9.500 15.500 A6.500 6.500 0 0 1 18.500 15.500 Z" />
            </svg>
            <svg viewBox="0 0 18 18" className="ml-[9px] size-[18px]" aria-hidden="true">
              <path d="M17 0 Q18 0 18 1 L11 17 Q10 18 9.500 17 V9 H1 Q0 8 1 7 Z" />
            </svg>
            <span className="ml-2">99%</span>
            <svg viewBox="0 0 53 24" className="ml-1 h-6 w-[53px]" aria-hidden="true">
              <rect x="1" y="1" width="46" height="22" rx="6" fill="none" stroke="#1a1a1a" strokeWidth="2" />
              <rect x="4" y="4" width="40" height="16" rx="3" />
              <path d="M50 8 Q53 9 53 12 Q53 15 50 16 Z" fill="#1a1a1a" />
            </svg>
          </div>
        </div>
        <div className="flex h-[68px] items-center justify-between pr-5 pl-[11px] text-white">
          <button type="button" aria-label="Geri" className="-mt-2">
            <Chevron direction="left" />
          </button>
          <h1 className="pt-1 text-[34px] leading-10 font-semibold">Gözlem Yap</h1>
          <button type="button" aria-label="İleri" className="-mt-2">
            <Chevron direction="right" />
          </button>
        </div>
      </header>

      <main className="flex-1 pr-[60px] pl-16">
        <label className="flex items-center gap-[26px] border-b-2 border-[#d6d5db] pt-12 pb-[21px]">
          <CalendarIcon />
          <input aria-label="Tarih" placeholder="04.02.2020" className={`${field} pt-1 text-[31px]`} />
        </label>
        <label className="flex items-center gap-[26px] border-b-2 border-[#d6d5db] pt-9 pb-[37px]">
          <SolidClockIcon />
          <input aria-label="Saat" placeholder="Saat Seç" className={`${field} pt-1 text-[31px]`} />
        </label>
        <label className="flex items-start gap-[26px] border-b-2 border-[#d6d5db] pt-7 pb-7">
          <CommentsIcon />
          <input aria-label="Açıklama" placeholder="Açıklama (max. 200)" className={`${field} mt-1 text-[32px]`} />
        </label>
        <div className="flex h-[95px] items-center border-b-2 border-[#d6d5db]">
          <TargetIcon />
          <p className="ml-4 text-[31px] leading-10 text-[#1c1c1e]">X:37.3305 Y:-122.02</p>
          <button type="button" aria-label="Konumu yenile" className="ml-[22px]">
            <RefreshIcon />
          </button>
        </div>
        <div className="-ml-1">
          <ObservationMap />
        </div>
        <label className="flex items-center gap-[26px] border-b-2 border-[#d6d5db] pt-[39px] pb-[29px]">
          <RingClockIcon />
          <input aria-label="Gözlem süresi" placeholder="Gözlem süresi (saat)" className={`${field} pt-1 text-[32px]`} />
        </label>
        <div className="flex h-40 items-center border-b-2 border-[#d6d5db]">
          <PeopleIcon />
          <button type="button" className="ml-[134px] text-[32px] leading-10 text-[#ff8b35]">
            MİSAFİR GÖZLEMCİ (0)
          </button>
        </div>
        <div className="flex h-[150px] items-center border-b-2 border-[#d6d5db]">
          <BirdIcon className="h-10 w-12 text-[#333]" />
          <button type="button" className="mb-2.5 ml-[151px] flex items-center gap-7 text-[32px] leading-10 text-[#ff8b35]">
            TÜR SEÇ
            <svg viewBox="0 0 20 34" className="h-[34px] w-5" aria-hidden="true">
              <path
                d="M4 4 L16 17 L4 30"
                fill="none"
                stroke="currentColor"
                strokeWidth="5"
                strokeLinecap="round"
                strokeLinejoin="round"
              />
            </svg>
          </button>
        </div>
      </main>

      <nav className="grid h-[98px] grid-cols-3 border-t border-[#a9a9ab] bg-[#333] text-[24px] text-[#b8b8b8]">
        <button type="button" className="flex items-center justify-center bg-[#ff8b35] pr-[26px] text-[#333]">
          <FeatherIcon />
          Gözlem Bilgileri
        </button>
        <button type="button" className="flex items-center justify-center pr-[26px]">
          <span className="w-14">
            <BirdIcon className="h-10 w-12" />
          </span>
          Tür Listesi
        </button>
        <button type="button" className="flex items-center justify-center pr-[26px]">
          <DoveIcon />
          Gönder
        </button>
      </nav>
      <div className="flex h-10 justify-center bg-white pt-[14px]">
        <div className="h-[11px] w-[630px] rounded-full bg-black" />
      </div>
    </div>
  );
}
